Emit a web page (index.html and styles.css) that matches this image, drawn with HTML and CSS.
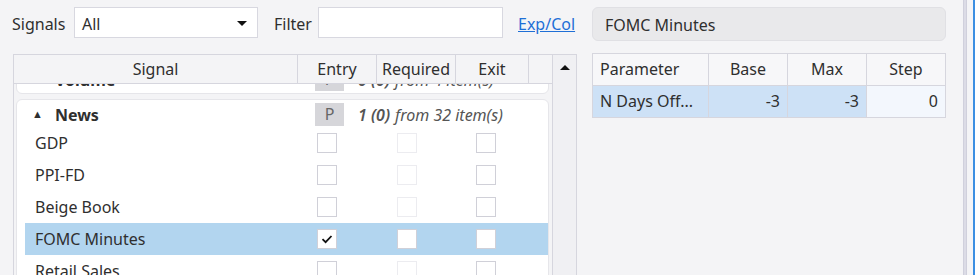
FILE: index.html
```html
<!DOCTYPE html>
<html>
<head>
<meta charset="utf-8">
<link rel="stylesheet" href="styles.css">
</head>
<body>
<div class="app">
  <section class="left">
    <div class="toolbar">
      <span class="lbl lbl-signals">Signals</span>
      <div class="combo"><span class="combo-text">All</span><span class="caret"></span></div>
      <span class="lbl lbl-filter">Filter</span>
      <div class="input"></div>
      <a class="lbl link" href="#">Exp/Col</a>
    </div>
    <div class="grid">
      <div class="grid-main">
        <div class="ghead">
          <div class="gh">Signal</div>
          <div class="gh">Entry</div>
          <div class="gh">Required</div>
          <div class="gh">Exit</div>
          <div class="gh gh-last"></div>
        </div>
        <div class="gbody">
          <div class="gcontent">
            <div class="card">
              <div class="grow group group-vol">
                <div class="gname"><span class="tri">&#9650;</span>Volume</div>
                <div class="gstat"><span class="badge">P</span><span class="cnt">0 (0)</span><span class="from">from 4 item(s)</span></div>
              </div>
            </div>
            <div class="card">
              <div class="grow group">
                <div class="gname"><span class="tri">&#9650;</span>News</div>
                <div class="gstat"><span class="badge">P</span><span class="cnt">1 (0)</span><span class="from">from 32 item(s)</span></div>
              </div>
              <div class="grow item"><div class="name">GDP</div><span class="cb"></span><span class="cb dis"></span><span class="cb"></span></div>
              <div class="grow item"><div class="name">PPI-FD</div><span class="cb"></span><span class="cb dis"></span><span class="cb"></span></div>
              <div class="grow item"><div class="name">Beige Book</div><span class="cb"></span><span class="cb dis"></span><span class="cb"></span></div>
              <div class="grow item sel"><div class="name">FOMC Minutes</div><span class="cb on"><svg width="14" height="14" viewBox="0 0 14 14"><path d="M2.5 7.2 L5.6 10.2 L11.5 4" fill="none" stroke="#111" stroke-width="1.8"/></svg></span><span class="cb"></span><span class="cb"></span></div>
              <div class="grow item"><div class="name">Retail Sales</div><span class="cb"></span><span class="cb dis"></span><span class="cb"></span></div>
            </div>
          </div>
        </div>
      </div>
      <div class="vscroll"><span class="up"></span></div>
    </div>
  </section>
  <section class="right">
    <div class="title">FOMC Minutes</div>
    <div class="params">
      <div class="ph">Parameter</div>
      <div class="ph c">Base</div>
      <div class="ph c">Max</div>
      <div class="ph c">Step</div>
      <div class="pc selc">N Days Off...</div>
      <div class="pc selc r">-3</div>
      <div class="pc selc r">-3</div>
      <div class="pc cur r">0</div>
    </div>
  </section>
  <div class="splitter"></div>
  <div class="edge"></div>
</div>
</body>
</html>
```
FILE: styles.css
```css
* { box-sizing: border-box; }
html, body { margin: 0; height: 100%; overflow: hidden; }
body {
  background: #f4f4f6;
  font-family: "Noto Sans", "Open Sans", sans-serif;
  font-size: 16px;
  color: #2f2f2f;
}
.app { display: flex; height: 275px; }
.left { width: 578px; padding-top: 7px; flex: none; }
.toolbar { display: flex; align-items: center; height: 31px; padding-left: 12px; }
.lbl { line-height: 28px; padding-top: 3px; flex: none; }
.lbl-signals { width: 62px; }
.combo {
  width: 184px; height: 31px; background: #fff; flex: none;
  border: 1px solid #d8d8e0; display: flex; align-items: center; justify-content: space-between;
  padding: 2px 10px 0 7px;
}
.caret { width: 0; height: 0; border-left: 5px solid transparent; border-right: 5px solid transparent; border-top: 5px solid #111; margin-top: -1px; }
.lbl-filter { margin-left: 16px; width: 44px; }
.input { width: 185px; height: 31px; background: #fff; border: 1px solid #d8d8e0; flex: none; }
.link { margin-left: 15px; color: #1f6fd6; text-decoration: underline; }

.grid { display: flex; margin: 16px 0 0 13px; width: 564px; height: 240px; border-top: 1px solid #d6d6de; border-left: 1px solid #d6d6de; }
.grid-main { width: 539px; display: flex; flex-direction: column; border-right: 1px solid #d6d6de; }
.ghead { display: grid; grid-template-columns: 284px 79px 79px 73px 1fr; height: 29px; border-bottom: 1px solid #d6d6de; flex: none; }
.gh { text-align: center; line-height: 28px; border-right: 1px solid #d6d6de; }
.gh-last { border-right: none; }
.gbody { flex: 1; overflow: hidden; }
.gcontent { margin-top: -19px; padding: 0 3px 0 2px; }
.card { background: #fff; border: 1px solid #e6e6ea; border-radius: 6px; margin-bottom: 5px; padding-left: 8px; }
.grow { display: grid; grid-template-columns: 292px 80px 79px 1fr; align-items: center; }
.group { height: 27px; padding-top: 2px; }
.group-vol { height: 27px; padding-top: 0; }
.gname { font-weight: bold; display: flex; align-items: center; padding-left: 7px; }
.tri { font-size: 11px; margin-right: 12px; position: relative; top: -1px; }
.gstat { grid-column: 2 / 5; display: flex; align-items: center; margin-left: -2px; font-style: italic; }
.badge { width: 29px; height: 23px; background: #d6d6da; color: #666; font-style: normal; text-align: center; line-height: 23px; }
.cnt { margin-left: 14px; font-weight: 600; color: #555; }
.from { margin-left: 5px; color: #555; }
.item { height: 32px; }
.name { padding-left: 10px; }
.sel { background: #b2d5ef; }
.cb { width: 20px; height: 20px; border: 1px solid #d0d0d8; background: #fff; display: flex; align-items: center; justify-content: center; }
.cb.dis { border-color: #ececf0; }
.vscroll { width: 24px; background: #f0f0f3; border-right: 1px solid #d6d6de; display: flex; justify-content: center; padding-top: 10px; }
.up { width: 0; height: 0; border-left: 5px solid transparent; border-right: 5px solid transparent; border-bottom: 5px solid #111; }

.right { width: 354px; margin-left: 14px; padding-top: 7px; flex: none; }
.title { height: 34px; background: #e9e9eb; border: 1px solid #e0e0e4; border-radius: 6px; padding: 2px 0 0 12px; line-height: 30px; }
.params { margin-top: 12px; display: grid; grid-template-columns: 116px 79px 79px 79px; border-top: 1px solid #d6d6de; border-left: 1px solid #d6d6de; width: 354px; }
.ph, .pc { border-right: 1px solid #d6d6de; border-bottom: 1px solid #d6d6de; height: 32px; line-height: 31px; padding: 0 7px; white-space: nowrap; }
.ph { background: #f7f7f9; }
.ph.c { text-align: center; }
.pc.r { text-align: right; }
.selc { background: #cde1f6; }
.cur { background: #f3f7fd; }
.splitter { margin-left: 17px; width: 4px; background: #dcdce6; border-left: 1px solid #d0d0dc; border-right: 1px solid #d0d0dc; }
.edge { margin-left: 6px; width: 2px; background: #3c8fe2; }
```
